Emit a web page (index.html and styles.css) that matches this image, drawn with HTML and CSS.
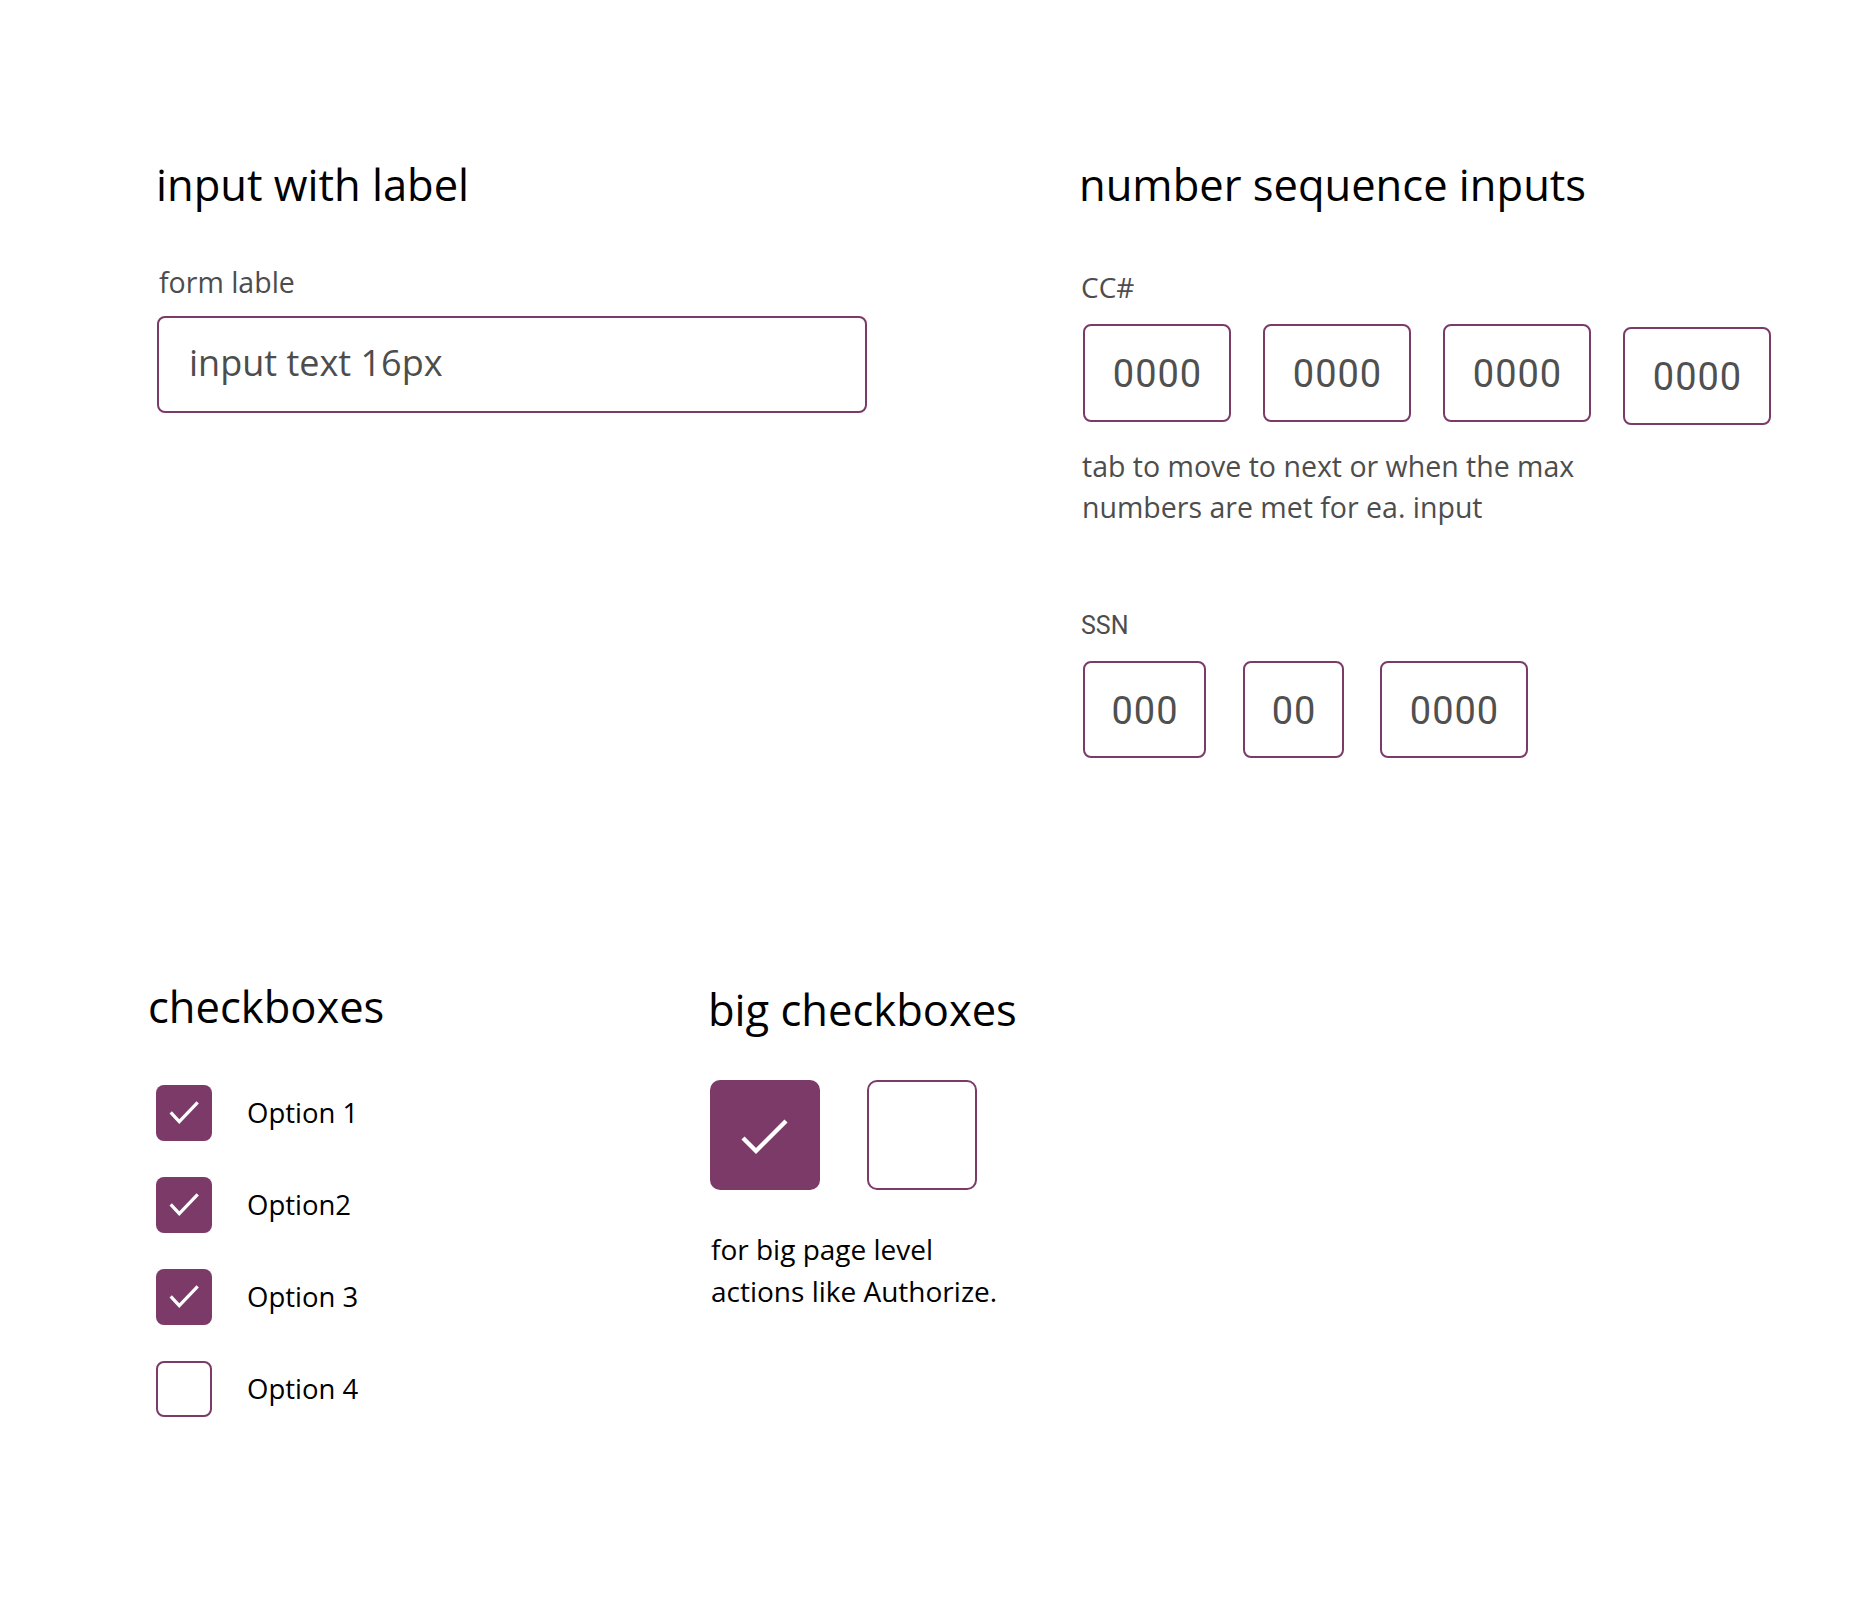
FILE: index.html
```html
<!DOCTYPE html>
<html lang="en">
<head>
<meta charset="utf-8">
<title>Form components</title>
<link rel="stylesheet" href="styles.css">
</head>
<body>
<main class="page">
  <div class="row row-top">
    <section class="col col-input">
      <h2 class="heading">input with label</h2>
      <div class="label label-form">form lable</div>
      <div class="text-input">input text 16px</div>
    </section>
    <section class="col col-seq">
      <h2 class="heading">number sequence inputs</h2>
      <div class="label label-cc">CC#</div>
      <div class="seq">
        <div class="seq-box w-cc">0000</div>
        <div class="seq-box w-cc">0000</div>
        <div class="seq-box w-cc">0000</div>
        <div class="seq-box w-cc seq-box-low">0000</div>
      </div>
      <p class="help">tab to move to next or when the max<br>numbers are met for ea. input</p>
      <div class="label label-ssn">SSN</div>
      <div class="seq seq-ssn">
        <div class="seq-box w-3">000</div>
        <div class="seq-box w-2">00</div>
        <div class="seq-box w-cc">0000</div>
      </div>
    </section>
  </div>
  <div class="row row-bottom">
    <section class="col col-checks">
      <h2 class="heading">checkboxes</h2>
      <ul class="check-list">
        <li class="check-item">
          <span class="cb cb-on"><svg viewBox="0 0 56 56" width="56" height="56"><polyline points="14.7,27.3 23.3,36.7 41.7,17.3" fill="none" stroke="#fff" stroke-width="3.2"/></svg></span>
          <span class="cb-label">Option 1</span>
        </li>
        <li class="check-item">
          <span class="cb cb-on"><svg viewBox="0 0 56 56" width="56" height="56"><polyline points="14.7,27.3 23.3,36.7 41.7,17.3" fill="none" stroke="#fff" stroke-width="3.2"/></svg></span>
          <span class="cb-label">Option2</span>
        </li>
        <li class="check-item">
          <span class="cb cb-on"><svg viewBox="0 0 56 56" width="56" height="56"><polyline points="14.7,27.3 23.3,36.7 41.7,17.3" fill="none" stroke="#fff" stroke-width="3.2"/></svg></span>
          <span class="cb-label">Option 3</span>
        </li>
        <li class="check-item">
          <span class="cb cb-off"></span>
          <span class="cb-label">Option 4</span>
        </li>
      </ul>
    </section>
    <section class="col col-big">
      <h2 class="heading">big checkboxes</h2>
      <div class="big-row">
        <span class="big-cb big-on"><svg viewBox="0 0 110 110" width="110" height="110"><polyline points="33,58 46,71 76,41" fill="none" stroke="#fff" stroke-width="4.4"/></svg></span>
        <span class="big-cb big-off"></span>
      </div>
      <p class="big-note">for big page level<br>actions like Authorize.</p>
    </section>
  </div>
</main>
</body>
</html>
```

FILE: styles.css
```css
* { box-sizing: border-box; }

html, body {
  margin: 0;
  padding: 0;
  background: #ffffff;
}

body {
  font-family: "Open Sans", "Liberation Sans", sans-serif;
  color: #000;
  width: 1858px;
  min-height: 1618px;
}

.page {
  padding-top: 159px;
}

.row {
  display: flex;
  align-items: flex-start;
}

.row-top {
  padding-left: 158px;
}

.row-bottom {
  padding-left: 148px;
  margin-top: 223px;
}

.heading {
  margin: 0;
  font-size: 43.5px;
  line-height: 52px;
  font-weight: 400;
  color: #000;
  white-space: nowrap;
}

.col-input {
  width: 923px;
}

.col-input .heading {
  margin-left: -2px;
}

.label {
  color: #4d4d4d;
  white-space: nowrap;
}

.label-form {
  font-size: 28.5px;
  line-height: 34px;
  margin-top: 54px;
  margin-left: 1px;
}

.text-input {
  margin-top: 17px;
  width: 710px;
  height: 97px;
  border: 2px solid #7b3a68;
  border-radius: 8px;
  display: flex;
  align-items: center;
  padding: 0 0 4px 30px;
  font-size: 36px;
  line-height: 42px;
  color: #4d4d4d;
  margin-left: -1px;
}

.col-seq .heading {
  margin-left: -2px;
}

.label-cc {
  font-size: 28px;
  line-height: 34px;
  margin-top: 59px;
}

.seq {
  display: flex;
  align-items: flex-start;
  gap: 32px;
  margin-top: 20px;
  margin-left: 2px;
}

.seq-box {
  height: 98px;
  border: 2px solid #7b3a68;
  border-radius: 8px;
  display: flex;
  align-items: center;
  justify-content: center;
  padding-top: 2px;
  padding-left: 1px;
  font-family: Roboto, "Open Sans", sans-serif;
  font-size: 38px;
  line-height: 38px;
  letter-spacing: 1px;
  color: #505050;
}

.w-cc { width: 148px; }
.w-3 { width: 123px; }
.w-2 { width: 101px; }

.seq-box-low {
  margin-top: 3px;
}

.help {
  margin: 21px 0 0 1px;
  font-size: 28.5px;
  line-height: 41px;
  color: #4d4d4d;
  white-space: nowrap;
}

.label-ssn {
  font-family: Roboto, "Open Sans", sans-serif;
  font-size: 25px;
  line-height: 30px;
  margin-top: 83px;
}

.seq-ssn {
  margin-top: 20px;
  gap: 0;
}

.seq-ssn .w-3 { margin-right: 37px; }
.seq-ssn .w-2 { margin-right: 36px; }
.seq-ssn .seq-box { height: 97px; }

.col-checks {
  width: 560px;
}

.check-list {
  list-style: none;
  margin: 52px 0 0 8px;
  padding: 0;
  display: flex;
  flex-direction: column;
  gap: 36px;
}

.check-item {
  display: flex;
  align-items: center;
  gap: 35px;
}

.cb {
  width: 56px;
  height: 56px;
  border-radius: 8px;
  flex: none;
  display: block;
}

.cb svg { display: block; }

.cb-on {
  background: #7b3a68;
}

.cb-off {
  border: 2px solid #7b3a68;
}

.cb-label {
  font-size: 27.5px;
  line-height: 34px;
  color: #000;
  white-space: nowrap;
}

.col-big {
  padding-top: 3px;
}

.big-row {
  display: flex;
  gap: 47px;
  margin-top: 44px;
  margin-left: 2px;
}

.big-cb {
  width: 110px;
  height: 110px;
  border-radius: 10px;
  display: block;
}

.big-cb svg { display: block; }

.big-on {
  background: #7b3a68;
}

.big-off {
  border: 2px solid #7b3a68;
}

.big-note {
  margin: 38px 0 0 3px;
  font-size: 28px;
  line-height: 42px;
  color: #000;
  white-space: nowrap;
}
```
